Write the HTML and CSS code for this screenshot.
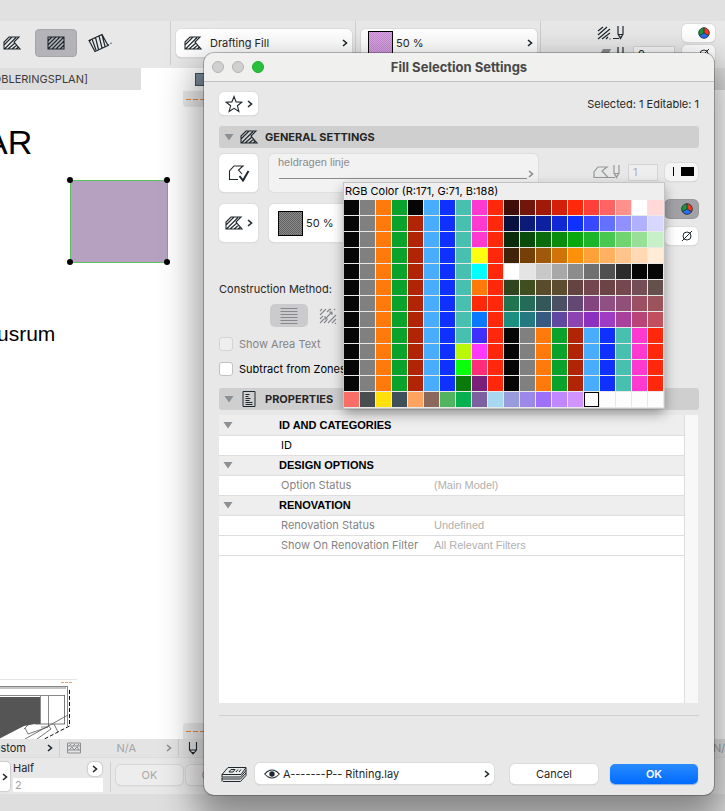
FILE: index.html
```html
<!DOCTYPE html>
<html lang="en">
<head>
<meta charset="utf-8">
<title>Fill Selection Settings</title>
<link rel="stylesheet" href="styles.css">
</head>
<body>
<svg class="defs" aria-hidden="true">
  <symbol id="i-fill" viewBox="0 0 18 14"><path d="M1 13V6L6 1h10l-5 5 6 7zM1 9l8-8M1.500 13 13 1.500M5 13l7-6M9 13l5-4M13 13l2.500-2" fill="none" stroke="currentColor" stroke-width="1.100"/></symbol>
  <symbol id="i-rect" viewBox="0 0 18 14"><path d="M1 1h16v12H1zM1 5l4-4M1 9l8-8M1 13 13 1M5 13 17 1M9 13l8-8M13 13l4-4" fill="none" stroke="currentColor" stroke-width="1.100"/></symbol>
  <symbol id="i-rot" viewBox="0 0 24 20"><path d="M1 7.500 14 1.500l6 11L7 18.500zM4 6l4 11M7.500 4.500l3 12M11 3l3 12M14 1.500l3 12M1 7.500h2M20 12.500l1-1M22.500 10.500l1-.500" fill="none" stroke="currentColor" stroke-width="1.200"/></symbol>
  <symbol id="i-chev" viewBox="0 0 6 8"><path d="M1 1l3.500 3L1 7" fill="none" stroke="currentColor" stroke-width="1.600"/></symbol>
  <symbol id="i-tri" viewBox="0 0 10 8"><path d="M.500 1h9L5 7.500z" fill="#8b9094"/></symbol>
  <symbol id="i-star" viewBox="0 0 18 18"><path d="M9 1.500l2.100 5.400 5.700.300-4.400 3.600 1.500 5.700L9 13.300l-4.900 3.200 1.500-5.700L1.200 7.200l5.700-.300z" fill="none" stroke="currentColor" stroke-width="1.100"/></symbol>
  <symbol id="i-check" viewBox="0 0 22 18"><path d="M10 15.500H1.500V7L6 2h9L10.500 6l3.500 4" fill="none" stroke="currentColor" stroke-width="1.100"/><path d="M11.500 12l3.500 4.500L20.500 7" fill="none" stroke="currentColor" stroke-width="2"/></symbol>
  <symbol id="i-hatchpen" viewBox="0 0 29 16"><path d="M1 6l5-4M1 10 10 2M1 14 13 4M5 14l8-6M9 14l2-2M12.500 14h1M16 13.500h6M21 1v8l2.500 4.500L26 9V1M21 9.500h5M22.500 12h2" fill="none" stroke="currentColor" stroke-width="1.200"/></symbol>
  <symbol id="i-bgpen" viewBox="0 0 29 16"><path d="M1 12 6 3h8l-4 9z" fill="#888c8f"/><path d="M16 13.500h6M21 1v8l2.500 4.500L26 9V1M21 9.500h5" fill="none" stroke="currentColor" stroke-width="1.200"/></symbol>
  <symbol id="i-contpen" viewBox="0 0 29 16"><path d="M15 13.500H1V8l4-5h9l-5 4 6 6.500h7M21 1v8l2.500 4.500L26 9V1M21 9.500h5M22.500 12h2" fill="none" stroke="currentColor" stroke-width="1.200"/></symbol>
  <symbol id="i-rgb" viewBox="0 0 12 12"><path d="M6 6V.700a5.300 5.300 0 0 1 4.600 7.950z" fill="#f03a24"/><path d="M6 6l4.600 2.650a5.300 5.300 0 0 1-9.200 0z" fill="#2470f0"/><path d="M6 6 1.400 8.650A5.300 5.300 0 0 1 6 .700z" fill="#149a40"/><path d="M6 6V.700M6 6l4.600 2.650M6 6 1.400 8.650M6 .700a5.300 5.300 0 1 1 0 10.600A5.300 5.300 0 1 1 6 .700z" fill="none" stroke="#1d262c" stroke-width=".800"/></symbol>
  <symbol id="i-none" viewBox="0 0 12 12"><circle cx="6" cy="6" r="4" fill="none" stroke="currentColor"/><path d="M1 11 11 1" stroke="currentColor"/></symbol>
  <symbol id="i-pen" viewBox="0 0 10 14"><path d="M1.500 1v8L5 13l3.500-4V1M1.500 9h7M4 11.500h2" fill="none" stroke="currentColor" stroke-width="1.100"/></symbol>
  <symbol id="i-lines" viewBox="0 0 18 16"><path d="M.500.500h17M.500 3.500h17M.500 6.500h17M.500 9.500h17M.500 12.500h17M.500 15.500h17" stroke="#85888c"/></symbol>
  <symbol id="i-arrowhatch" viewBox="0 0 18 16"><path d="M1 3l2-2M1 7l6-6M1 11l3-3M8 4l3-3M1 15l4-4M5 15l3-3M9 15l3-3M12 12l5-5M13 15l4-4M16 16l1-1M12 1l-1 1M16 1l-1 1M6 11l7-7M10 4h3v3M6 8v3h3" fill="none" stroke="#85888c" stroke-width="1.100"/></symbol>
  <symbol id="i-doc" viewBox="0 0 13 16"><path d="M.500.500h12v15H.500z" fill="none" stroke="currentColor"/><path d="M3 3.500h4M3 5.500h3M3 7.500h5M3 9.500h4M3 11.500h7M3 13.500h7" fill="none" stroke="currentColor"/></symbol>
  <symbol id="i-wall" viewBox="0 0 14 12"><path d="M.500 1h13v10H.500zM.500 4h13M.500 8h13M2 8l3-3 2 3 3-3 2 3M2 4l2-2M6 4l2-2M10 4l2-2" fill="none" stroke="currentColor"/></symbol>
  <symbol id="i-eye" viewBox="0 0 16 10"><path d="M.700 5Q8-3 15.300 5 8 13 .700 5z" fill="none" stroke="currentColor" stroke-width="1.100"/><circle cx="8" cy="5" r="2.700" fill="currentColor"/></symbol>
  <symbol id="i-layers" viewBox="0 0 26 16"><path d="M1 8.500 7 1.500h18L20 8.500zM1 8.500V11h18.500L25 4.500V2M1 11.500v1.500h18.500L25 7V4.500M2 15.500h17.500L25 9.500V7M1 12.500v3M8 6l2-2.500h4L12 6zM15 6l2-2.500M18 6l2-2.500" fill="none" stroke="currentColor"/></symbol>
</svg>

<div class="app">
  <div class="strip"></div>
  <header class="toolbar">
    <button class="tool" aria-label="Polygon fill"><svg width="20" height="14"><use href="#i-fill"/></svg></button>
    <button class="tool on" aria-label="Rectangular fill"><svg width="18" height="14"><use href="#i-rect"/></svg></button>
    <button class="tool last" aria-label="Rotated rectangular fill"><svg width="24" height="20"><use href="#i-rot"/></svg></button>
    <div class="tb-group">
      <div class="combo"><svg width="18" height="14"><use href="#i-fill"/></svg><select class="wide" aria-label="Fill type"><option>Drafting Fill</option></select><svg class="chev" width="6" height="8"><use href="#i-chev"/></svg></div>
    </div>
    <div class="tb-group">
      <div class="combo tight"><span class="swatch pink"></span><select aria-label="Fill pattern"><option>50 %</option></select><svg class="chev" width="6" height="8"><use href="#i-chev"/></svg></div>
    </div>
    <div class="tb-pens">
      <div class="penrow"><svg width="29" height="16"><use href="#i-hatchpen"/></svg><span class="pen-gap"></span><button class="penbtn" aria-label="RGB pen color"><svg width="12" height="12"><use href="#i-rgb"/></svg></button></div>
      <div class="penrow"><svg width="29" height="16"><use href="#i-bgpen"/></svg><input class="pen-in" aria-label="Background pen" value="0"><button class="penbtn" aria-label="No background"><svg width="12" height="12"><use href="#i-none"/></svg></button></div>
    </div>
  </header>
  <nav class="tabs"><a class="tab" href="#plan">OBLERINGSPLAN]</a><span class="tab-mark"></span><span class="tab-rest"></span></nav>

  <main class="canvas" id="plan">
    <span class="dash d-top"></span>
    <span class="label big">AR</span>
    <svg class="shape" width="104" height="90" aria-label="Selected fill"><path d="M4.500 4.500h97v82h-97z" fill="#b6a2c0" stroke="#5cc05c"/><g><circle cx="4" cy="4" r="3"/><circle cx="101" cy="4" r="3"/><circle cx="4" cy="86" r="3"/><circle cx="101" cy="86" r="3"/></g></svg>
    <span class="label mid">usrum</span>
    <svg class="sketch" width="80" height="62" aria-label="Perspective sketch">
      <path d="M0 1.500h77" stroke="#e4e4e4"/><path d="M61 4.500h11" stroke="#f0a060" stroke-dasharray="3 1"/>
      <path d="M0 8.500h68M0 10h66" stroke="#888"/><path d="M0 19h40v27h-5L24 48 0 60z" fill="#555"/>
      <path d="M40.500 17v29M0 17.500h65M48.500 17v32M67.500 8v40M41 49h7" fill="none" stroke="#888"/>
      <path d="M64.500 17v29M35 46h30M25 61l43-24M0 60 24 47M24 51l5-5M25 50l3 6 20-7M37 61l14-10-3-4M54 46l4 8" fill="none" stroke="#555" stroke-width=".800"/>
      <path d="M69.500 12v36l-27 14" fill="none" stroke="#111" stroke-dasharray="4 2"/>
    </svg>
    <span class="dash d-bottom"></span>
  </main>

  <footer class="bottom">
    <div class="b-row one">
      <span class="b-cell custom">Custom<svg class="chev" width="6" height="8"><use href="#i-chev"/></svg></span>
      <span class="b-cell na"><svg width="14" height="12"><use href="#i-wall"/></svg><span>N/A</span><svg class="chev" width="6" height="8"><use href="#i-chev"/></svg></span>
      <span class="b-cell"><svg width="10" height="14"><use href="#i-pen"/></svg></span>
      <span class="b-end">N/A</span>
    </div>
    <div class="b-row two">
      <button class="edge" aria-label="More"><svg width="6" height="8"><use href="#i-chev"/></svg></button>
      <div class="half"><label for="half">Half</label><button class="round" aria-label="Half options"><svg width="6" height="8"><use href="#i-chev"/></svg></button><input id="half" value="2"></div>
      <div class="b-actions"><button class="ghost" disabled>OK</button><button class="ghost" disabled>Cancel</button></div>
    </div>
  </footer>
  <div class="under"></div>

  <section class="dialog" role="dialog" aria-labelledby="dlg-title">
    <header class="titlebar">
      <span class="lights"><button class="light" aria-label="Close"></button><button class="light" aria-label="Minimize"></button><button class="light go" aria-label="Zoom"></button></span>
      <h1 id="dlg-title">Fill Selection Settings</h1>
    </header>
    <div class="content">
      <div class="top-row">
        <button class="btn fav" aria-label="Favorites"><svg width="18" height="18"><use href="#i-star"/></svg><svg width="6" height="8"><use href="#i-chev"/></svg></button>
        <span>Selected: 1 Editable: 1</span>
      </div>
      <h2 class="section"><svg width="10" height="8"><use href="#i-tri"/></svg><svg class="s-icon" width="18" height="14"><use href="#i-fill"/></svg>General Settings</h2>
      <div class="general">
        <button class="btn" aria-label="Contour"><svg width="22" height="18"><use href="#i-check"/></svg></button>
        <button class="btn line" disabled><span>heldragen linje</span><span class="rule"></span><svg width="6" height="8"><use href="#i-chev"/></svg></button>
        <div class="pens">
          <div class="penrow dim"><svg width="29" height="16"><use href="#i-contpen"/></svg><input class="pen-in" aria-label="Contour pen" value="1" disabled><button class="penbtn black" aria-label="Contour color"></button></div>
          <div class="penrow"><button class="penbtn down" aria-label="RGB foreground"><svg width="12" height="12"><use href="#i-rgb"/></svg></button></div>
          <div class="penrow"><button class="penbtn" aria-label="No background"><svg width="12" height="12"><use href="#i-none"/></svg></button></div>
        </div>
        <button class="btn" aria-label="Fill type"><svg width="18" height="14"><use href="#i-fill"/></svg><svg width="6" height="8"><use href="#i-chev"/></svg></button>
        <button class="btn pattern"><span class="swatch gray"></span>50 %</button>
      </div>
      <div class="method">
        <span>Construction Method:</span>
        <div class="method-btns"><button class="seg" aria-label="Link to origin"><svg width="18" height="16"><use href="#i-lines"/></svg></button><button class="seg off" aria-label="Distorted"><svg width="18" height="16"><use href="#i-arrowhatch"/></svg></button></div>
        <label class="check muted"><input type="checkbox" disabled>Show Area Text</label>
        <label class="check"><input type="checkbox">Subtract from Zones</label>
      </div>
      <h2 class="section"><svg width="10" height="8"><use href="#i-tri"/></svg><svg class="s-icon" width="18" height="16"><use href="#i-doc"/></svg>Properties</h2>
      <div class="props">
        <table>
          <tbody>
            <tr class="group"><th colspan="2"><span><svg width="10" height="8"><use href="#i-tri"/></svg>ID AND CATEGORIES</span></th></tr>
            <tr class="live"><td>ID</td><td></td></tr>
            <tr class="group"><th colspan="2"><span><svg width="10" height="8"><use href="#i-tri"/></svg>DESIGN OPTIONS</span></th></tr>
            <tr><td>Option Status</td><td>(Main Model)</td></tr>
            <tr class="group"><th colspan="2"><span><svg width="10" height="8"><use href="#i-tri"/></svg>RENOVATION</span></th></tr>
            <tr><td>Renovation Status</td><td>Undefined</td></tr>
            <tr><td>Show On Renovation Filter</td><td>All Relevant Filters</td></tr>
          </tbody>
        </table>
        <div class="scroll"></div>
      </div>
      <footer class="dlg-foot">
        <svg width="26" height="16"><use href="#i-layers"/></svg>
        <div class="combo layer"><svg width="16" height="10"><use href="#i-eye"/></svg><select aria-label="Layer"><option>A-------P-- Ritning.lay</option></select><svg class="chev" width="6" height="8"><use href="#i-chev"/></svg></div>
        <button class="act">Cancel</button>
        <button class="act primary">OK</button>
      </footer>
    </div>
    <div class="palette">
      <p>RGB Color (R:171, G:71, B:188)</p>
      <div class="cells" id="cells"></div>
    </div>
  </section>
</div>
<script src="palette.js"></script>
</body>
</html>
```
FILE: styles.css
```css
* { box-sizing: border-box; }
body {
  margin: 0;
  font: 11px/14px Inter, "Liberation Sans", sans-serif;
  color: #262626;
}
button, input, select { font: inherit; color: inherit; margin: 0; padding: 0; border: 0; }
svg { flex: none; display: block; color: #1f282e; }
.defs { position: absolute; width: 0; height: 0; }

.app {
  position: relative;
  display: flex;
  flex-direction: column;
  min-height: 100vh;
  overflow: hidden;
  background: #fff;
}
.strip { height: 21px; background: #e1e1e1; }
.toolbar { display: flex; height: 47px; background: #e8e8e8; }
.tool {
  width: 42px;
  height: 28px;
  margin-top: 8px;
  display: grid;
  place-items: center;
  background: none;
  border-radius: 4px;
}
.tool:first-child { margin-left: -9px; margin-right: 2px; }
.tool.on { background: #b4b3b8; border: 1px solid #a6a5aa; }
.tool.last { margin-right: 49px; margin-left: 2px; }
.tb-group { width: 185px; padding: 8px 3px 0 5px; border-left: 1px solid #cecece; margin-bottom: 3px; }
.combo {
  display: flex;
  align-items: center;
  height: 28px;
  padding: 0 4px 0 8px;
  background: #fff;
  border-radius: 5px;
  box-shadow: 0 0 0 1px #dcdcdc, 0 1px 1px #9a9a9a;
}
.combo.tight { padding-left: 7px; }
.combo select { flex: 1; min-width: 0; appearance: none; background: none; margin-left: 3px; }
.combo select.wide { margin-left: 8px; }
.swatch { flex: none; width: 25px; height: 25px; border: 1px solid #000; }
.swatch.pink { background: repeating-conic-gradient(#c68ad2 0 25%, #daa8e4 0 50%) 0 0 / 2px 2px; }
.swatch.gray { background: repeating-conic-gradient(#606060 0 25%, #8c8c8c 0 50%) 0 0 / 2px 2px; }
.tb-pens { flex: 1; border-left: 1px solid #cecece; margin-bottom: 3px; padding: 3px 10px 0 0; display: flex; flex-direction: column; gap: 3px; }
.penrow { display: flex; justify-content: flex-end; align-items: center; height: 18px; }
.tb-pens .pen-in { width: 42px; margin: 0 7px; }
.pen-gap { width: 56px; }
.pen-in { width: 30px; height: 17px; padding-left: 4px; background: #f8f8f8; border: 1px solid #d4d4d4; }
.penbtn {
  width: 33px;
  height: 18px;
  padding-left: 11px;
  display: grid;
  place-items: center;
  background: #fff;
  border-radius: 5px;
  box-shadow: 0 0 0 1px #dcdcdc, 0 1px 1px #a8a8a8;
}
.tabs { display: flex; height: 22px; }
.tab {
  width: 141px;
  padding: 4px 53px 0 0;
  display: flex;
  justify-content: flex-end;
  overflow: hidden;
  background: #dedede;
  color: #3c3c3c;
  text-decoration: none;
}
.tab-mark { width: 14px; height: 13px; margin: 5px 0 0 54px; background: #7a8a99; border: 1px solid #40505e; }
.tab-rest { flex: 1; margin-left: 100px; background: #dedede; }

.canvas { position: relative; flex: 1; overflow: hidden; background: #fff; }
.label { position: absolute; font-family: "Liberation Sans", sans-serif; color: #000; }
.big { left: -15px; top: 32px; font-size: 34px; line-height: 40px; }
.mid { left: -3px; top: 232px; font-size: 21px; line-height: 24px; }
.shape { position: absolute; left: 66px; top: 86px; }
.sketch { position: absolute; left: 0; bottom: -1px; }
.dash {
  position: absolute;
  left: 183px;
  width: 40px;
  height: 16px;
  background: repeating-linear-gradient(90deg, #e88c3c 0 5px, transparent 5px 7px) 3px 8px / 40px 1px no-repeat #ececec;
  border-radius: 0 0 0 4px;
}
.d-top { top: 1px; }
.d-bottom { bottom: 0; border-radius: 4px 0 0 0; }

.bottom { height: 55px; background: #e8e8e8; }
.b-row { display: flex; position: relative; }
.one { height: 19px; align-items: center; border-bottom: 1px solid #dcdcdc; background: #e4e4e4; }
.b-cell { display: flex; align-items: center; height: 18px; padding: 0 7px; }
.custom { width: 60px; justify-content: flex-end; gap: 21px; padding-right: 6px; border-right: 1px solid #cfcfcf; }
.na { width: 119px; justify-content: flex-end; gap: 30px; padding-right: 6px; border-right: 1px solid #cfcfcf; color: #a4a4a4; }
.na svg { color: #8a8e90; }
.na svg:first-child { margin-right: auto; }
.na + .b-cell { padding-left: 9px; }
.b-end { margin-left: auto; width: 12px; overflow: hidden; color: #a4a4a4; }
.two { padding-top: 4px; }
.edge { width: 10px; height: 29px; display: grid; place-items: center; background: #fff; border-radius: 0 4px 4px 0; box-shadow: 0 0 1px 1px #ccc; }
.half { width: 90px; margin-left: 3px; display: grid; grid-template-columns: 1fr 14px; row-gap: 1px; }
.half label { line-height: 13px; }
.half input { grid-column: 1 / 3; width: 100%; height: 14px; padding-left: 2px; background: #fff; color: #a0a0a0; }
.round { width: 14px; height: 14px; margin-left: -1px; display: grid; place-items: center; background: #fff; border-radius: 5px; box-shadow: 0 0 1px 1px #ccc; }
.b-actions { display: flex; gap: 3px; margin-left: 7px; padding: 3px 0 0 5px; height: 30px; border-left: 1px solid #cfcfcf; }
.ghost { width: 67px; height: 20px; color: #a8a8a8; background: #ededed; border-radius: 5px; box-shadow: 0 0 0 1px #d8d8d8, 0 1px 1px #b8b8b8; }
.under { height: 17px; background: #dedede; }

.dialog {
  position: absolute;
  left: 204px;
  right: 11px;
  top: 53px;
  bottom: 16px;
  display: flex;
  flex-direction: column;
  background: #e8e8e8;
  border-radius: 10px;
  box-shadow: 0 0 0 1px rgba(0, 0, 0, .25), 0 18px 36px 8px rgba(0, 0, 0, .4);
}
.titlebar {
  position: relative;
  display: flex;
  justify-content: center;
  align-items: center;
  height: 29px;
  background: #f0f0ee;
  border-bottom: 1px solid #c2c2c2;
  border-radius: 10px 10px 0 0;
}
h1 { margin: 0; font-size: 13px; font-weight: 700; color: #484848; }
.lights { position: absolute; left: 8px; display: flex; gap: 8px; }
.light { width: 12px; height: 12px; border-radius: 50%; background: #d0d0d0; border: 1px solid #b4b4b4; }
.light.go { background: #28c03c; border-color: #1cae2e; }
.content { flex: 1; display: flex; flex-direction: column; padding: 10px 15px 11px; }
.top-row { display: flex; justify-content: space-between; align-items: center; margin-bottom: 11px; }
.btn {
  display: flex;
  align-items: center;
  justify-content: center;
  gap: 4px;
  width: 39px;
  height: 38px;
  background: #fff;
  border-radius: 5px;
  box-shadow: 0 0 0 1px #dedede, 0 1px 1px #a8a8a8;
}
.fav { height: 23px; }
.section {
  display: flex;
  align-items: center;
  height: 22px;
  margin: 0;
  padding-left: 5px;
  background: #cfcfcf;
  border-radius: 3px;
  font-size: 11px;
  font-weight: 700;
  text-transform: uppercase;
}
.s-icon { margin: 0 7px 0 6px; }
.general {
  display: grid;
  grid-template-columns: 39px minmax(0, 269px) 1fr;
  grid-template-rows: 38px 38px;
  gap: 12px 11px;
  margin-top: 6px;
}
.line, .pattern { width: 100%; }
.line {
  position: relative;
  align-items: flex-start;
  justify-content: flex-start;
  padding: 1px 9px;
  background: #f2f2f2;
  color: #8c8c8c;
  font-family: "Liberation Sans", sans-serif;
  box-shadow: 0 0 0 1px #dedede;
}
.rule { position: absolute; left: 10px; right: 11px; top: 24px; height: 1px; background: #8c8c8c; }
.line svg { position: absolute; right: 4px; top: 16px; color: #8c8c8c; }
.pattern { justify-content: flex-start; padding-left: 9px; gap: 3px; }
.pens { grid-row: 1 / 3; grid-column: 3; display: flex; flex-direction: column; gap: 9px; padding: 9px 1px 0 0; }
.pens .penrow { flex: none; }
.pens .penrow:first-child { margin-bottom: 10px; }
.dim svg { color: #94989a; }
.dim .pen-in { margin: 0 7px 0 6px; color: #b0b0b0; background: #eee; }
.black { background: linear-gradient(#000, #000) 8px 4px / 1px 9px no-repeat, linear-gradient(#000, #000) 16px 4px / 13px 9px no-repeat, #f4f4f4; }
.down { background: #a2a1a6; box-shadow: 0 0 0 1px #98979c; }
.method { display: flex; flex-direction: column; margin-top: 40px; }
.method-btns { display: flex; margin: 8px 0 10px 51px; }
.seg { width: 38px; height: 23px; display: grid; place-items: center; background: #cbcbcd; border-radius: 5px; }
.seg.off { background: none; width: 40px; }
.check { display: flex; align-items: center; gap: 6px; height: 14px; margin-bottom: 11px; color: #000; }
.check input {
  appearance: none;
  width: 14px;
  height: 14px;
  background: #fff;
  border: 1px solid #c2c2c2;
  border-radius: 3px;
}
.muted { color: #848484; }
.muted input { background: #eee; border-color: #d4d4d4; }
.method .check:last-child { margin-bottom: 12px; }
.props { flex: 1; display: flex; align-items: stretch; margin: 5px 1px 12px 0; background: #fff; }
table { flex: 1; align-self: flex-start; border-collapse: collapse; table-layout: fixed; }
tr { height: 20px; border-bottom: 1px solid #dedede; }
th, td { height: 20px; padding: 0; text-align: left; line-height: 14px; }
td { color: #848484; }
td:first-child { width: 215px; padding-left: 62px; white-space: nowrap; }
td + td { color: #b0b0b0; font-family: "Liberation Sans", sans-serif; }
.live td { color: #000; }
.group { background: #eee; }
.group span { display: flex; align-items: center; gap: 46px; padding-left: 4px; }
.group th { font-family: "Liberation Sans", sans-serif; color: #000; }
.scroll { width: 14px; background: #f8f8f8; border-left: 1px solid #dedede; }
.dlg-foot { display: flex; align-items: center; padding: 47px 1px 0 2px; border-top: 1px solid #cfcfcf; }
.layer { flex: 1; height: 21px; margin: 0 16px 0 8px; padding-left: 9px; }
.act { width: 88px; height: 20px; background: #fff; border-radius: 5px; color: #262626; box-shadow: 0 0 0 1px #dcdcdc, 0 1px 1px #a0a0a0; }
.primary { margin-left: 12px; color: #fff; font-weight: 600; background: linear-gradient(#2a8bff, #006bff); box-shadow: 0 1px 1px #8ab0e0; }

.palette {
  position: absolute;
  left: 140px;
  top: 130px;
  background: #e8e8e8;
  box-shadow: 0 0 0 1px #c4c4c4, 0 5px 12px rgba(0, 0, 0, .4);
}
.palette p { margin: 0; padding-left: 1px; height: 17px; line-height: 17px; color: #000; background: #eee; white-space: nowrap; }
.cells { display: grid; grid-template-columns: repeat(20, 15px); grid-auto-rows: 15px; gap: 1px; padding: 0 1px 1px 0; }
.cell.sel { border: 1px solid #000; }
```
FILE: palette.js
```js
const K = "#060606", G = "#808080", O = "#ff7a0a", V = "#08a22c", W = "#b02408";
const B = "#48acff", U = "#1030ff", T = "#48c0b0", M = "#ff38d0", R = "#ff280a";
const base = [K, G, O, V, W, B, U, T, M, R];
const accents = [
  [T, M], [T, M], [T, M], [T, "#ffff10"], [T, "#00ffff"], [T, O], [T, R], [T, "#0a78ff"],
  [T, "#4030ff"], ["#b8f808", "#ff38ff"], ["#0aff0a", "#ff2e78"], ["#0a7a0a", "#7a1f7a"]
];
const ramps = [
  "#400e08 #72160c #a01a0a #d4200a #ff280a #ff4038 #ff6464 #ff908c #ffffff #ffd8d8",
  "#081040 #0c1a78 #0c20a0 #1028d4 #1030ff #3848ff #6470ff #9090ff #b0b0ff #d8d8ff",
  "#0a2c0a #0a4c0c #0a6c0c #0a8c0c #0aa80c #1cb428 #48c850 #70d470 #98e098 #c8f0c8",
  "#40240a #744008 #a0580a #d0740a #ff900a #ffa038 #ffb060 #ffc48c #ffd8b4 #ffecd8",
  "#ffffff #e4e4e4 #c8c8c8 #a8a8a8 #8c8c8c #707070 #505050 #2c2c2c #060606 #060606",
  "#304420 #404e20 #584c2c #5c4c30 #644440 #744650 #6c4448 #74484e #744e56 #64504c",
  "#20744f #246c58 #34585a #4c5064 #644874 #844480 #905084 #905078 #9c5064 #9c545c",
  "#1c9080 #247880 #385a80 #6048a0 #8c44b0 #8c30c0 #a03cc4 #a8409c #b84478 #c05060"
].map(r => r.split(" "));
const last = ("#fa6e68 #484e50 #ffe00a #40505a #ffa460 #8c685c #50b460 #08b050 #7c60a0 #a8d8f0 " +
  "#989cdc #9c88e8 #9c70f8 #c088ff #d094ff #fdfdfd #fdfdfd #fdfdfd #fdfdfd #fdfdfd").split(" ");
const colors = [];
accents.forEach((pair, i) => {
  const left = [K, G, O, V, i ? W : K, B, U, pair[0], pair[1], R];
  colors.push(...left, ...(ramps[i] || base));
});
colors.push(...last);
const selected = 12 * 20 + 15;
const grid = document.getElementById("cells");
colors.forEach((color, i) => {
  const cell = document.createElement("button");
  cell.className = i === selected ? "cell sel" : "cell";
  cell.style.background = color;
  cell.setAttribute("aria-label", color);
  grid.append(cell);
});
```
